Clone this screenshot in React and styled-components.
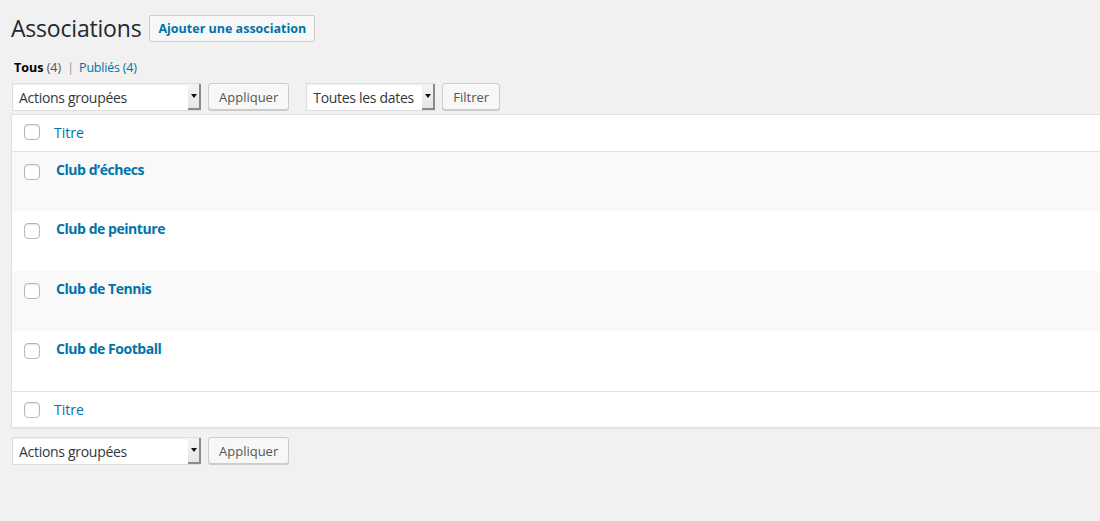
import React from "react";
import styled, { createGlobalStyle } from "styled-components";

const Global = createGlobalStyle`
  html, body { margin: 0; padding: 0; background: #f1f1f1; }
  body { font-family: "Open Sans", "Noto Sans", sans-serif; color: #444; font-size: 13px; }
  * { box-sizing: border-box; }
`;

const Wrap = styled.div`
  padding: 13px 0 0 11px;
  width: 1100px;
  overflow: hidden;
`;

const HeaderRow = styled.div`
  display: flex;
  align-items: center;
  gap: 8px;
  height: 30px;
`;

const Title = styled.h1`
  margin: 0;
  font-size: 23px;
  font-weight: 400;
  color: #23282d;
  line-height: 29px;
  letter-spacing: -0.2px;
`;

const AddButton = styled.a`
  display: inline-flex;
  align-items: center;
  height: 27px;
  padding: 0 8px;
  border: 1px solid #ccc;
  border-radius: 2px;
  background: #f7f7f7;
  color: #0073aa;
  font-weight: 700;
  font-size: 12.5px;
  text-decoration: none;
`;

const Views = styled.div`
  display: flex;
  align-items: center;
  margin: 16px 0 0 3px;
  font-size: 12.5px;
  color: #555;
  height: 16px;
`;

const ViewCurrent = styled.span`
  color: #000;
  font-weight: 700;
`;

const ViewLink = styled.a`
  color: #0073aa;
  text-decoration: none;
  letter-spacing: -0.2px;
`;

const Sep = styled.span`
  color: #999;
  margin: 0 5px 0 6px;
`;

const Tablenav = styled.div`
  display: flex;
  align-items: center;
  gap: 7px;
  margin: ${p => (p.$bottom ? "9px 0 0 1px" : "8px 0 3px 1px")};
  height: 28px;
`;

const Group = styled.div`
  display: flex;
  align-items: center;
  gap: 7px;
  margin-right: ${p => p.$gap || 0}px;
`;

const SelectBox = styled.div`
  display: flex;
  align-items: stretch;
  width: ${p => p.$w}px;
  height: 28px;
  border: 1px solid #ddd;
  border-right: none;
  background: #fff;
  box-shadow: inset 0 1px 2px rgba(0,0,0,.07);
  font-size: 14px;
  color: #32373c;
`;

const SelectLabel = styled.span`
  flex: 1;
  display: flex;
  align-items: center;
  padding-left: 6px;
  white-space: nowrap;
  letter-spacing: -0.3px;
  overflow: hidden;
`;

const SelectArrow = styled.span`
  width: 13px;
  flex: none;
  display: flex;
  align-items: center;
  justify-content: center;
  background: linear-gradient(#f4f4f4, #e6e6e6);
  border-right: 2px solid #8a8a8a;
  border-bottom: 2px solid #8a8a8a;
  &::after {
    content: "";
    border-left: 3.5px solid transparent;
    border-right: 3.5px solid transparent;
    border-top: 4px solid #111;
    margin-left: 1px;
  }
`;

const Button = styled.button`
  height: 27px;
  padding: 0 10px;
  border: 1px solid #ccc;
  border-radius: 3px;
  background: #f7f7f7;
  box-shadow: 0 1px 0 #ccc;
  color: #555;
  font-family: inherit;
  font-size: 13px;
  cursor: pointer;
  margin-top: -1px;
`;

const Table = styled.div`
  border: 1px solid #e1e1e1;
  border-right: none;
  background: #fff;
  box-shadow: 0 1px 1px rgba(0,0,0,.04);
`;

const HeadRow = styled.div`
  display: flex;
  align-items: center;
  height: ${p => (p.$foot ? 36 : 37)}px;
  padding-bottom: ${p => (p.$foot ? 0 : 2)}px;
  border-${p => (p.$foot ? "top" : "bottom")}: 1px solid #e1e1e1;
  background: #fff;
`;

const Row = styled.div`
  display: flex;
  align-items: flex-start;
  height: ${p => p.$h}px;
  background: ${p => (p.$alt ? "#f9f9f9" : "#fff")};
`;

const CheckCell = styled.div`
  width: 42px;
  padding-left: 12px;
  padding-top: ${p => p.$top || 0}px;
  flex: none;
`;

const Check = styled.span`
  display: block;
  width: 16px;
  height: 16px;
  border: 1px solid #b4b9be;
  border-radius: 4px;
  background: #fff;
  box-shadow: inset 0 1px 2px rgba(0,0,0,.1);
`;

const HeadTitle = styled.a`
  color: #0073aa;
  font-size: 14px;
  text-decoration: none;
`;

const RowTitle = styled.a`
  color: #0073aa;
  font-size: 14px;
  font-weight: 700;
  text-decoration: none;
  margin: 8px 0 0 2px;
  letter-spacing: -0.45px;
`;

function Select({ w, label }) {
  return (
    <SelectBox $w={w}>
      <SelectLabel>{label}</SelectLabel>
      <SelectArrow />
    </SelectBox>
  );
}

const rows = [
  { t: "Club d’échecs", h: 59 },
  { t: "Club de peinture", h: 60 },
  { t: "Club de Tennis", h: 60 },
  { t: "Club de Football", h: 60 },
];

export default function App() {
  return (
    <>
      <Global />
      <Wrap>
        <HeaderRow>
          <Title>Associations</Title>
          <AddButton href="#">Ajouter une association</AddButton>
        </HeaderRow>
        <Views>
          <ViewCurrent>Tous</ViewCurrent>&nbsp;(4)
          <Sep>|</Sep>
          <ViewLink href="#">Publiés (4)</ViewLink>
        </Views>
        <Tablenav>
          <Group $gap={10}>
            <Select w={189} label="Actions groupées" />
            <Button>Appliquer</Button>
          </Group>
          <Group>
            <Select w={129} label="Toutes les dates" />
            <Button>Filtrer</Button>
          </Group>
        </Tablenav>
        <Table>
          <HeadRow>
            <CheckCell><Check /></CheckCell>
            <HeadTitle href="#">Titre</HeadTitle>
          </HeadRow>
          {rows.map((r, i) => (
            <Row key={r.t} $alt={i % 2 === 0} $h={r.h}>
              <CheckCell $top={12}><Check /></CheckCell>
              <RowTitle href="#">{r.t}</RowTitle>
            </Row>
          ))}
          <HeadRow $foot>
            <CheckCell><Check /></CheckCell>
            <HeadTitle href="#">Titre</HeadTitle>
          </HeadRow>
        </Table>
        <Tablenav $bottom>
          <Group>
            <Select w={189} label="Actions groupées" />
            <Button>Appliquer</Button>
          </Group>
        </Tablenav>
      </Wrap>
    </>
  );
}
